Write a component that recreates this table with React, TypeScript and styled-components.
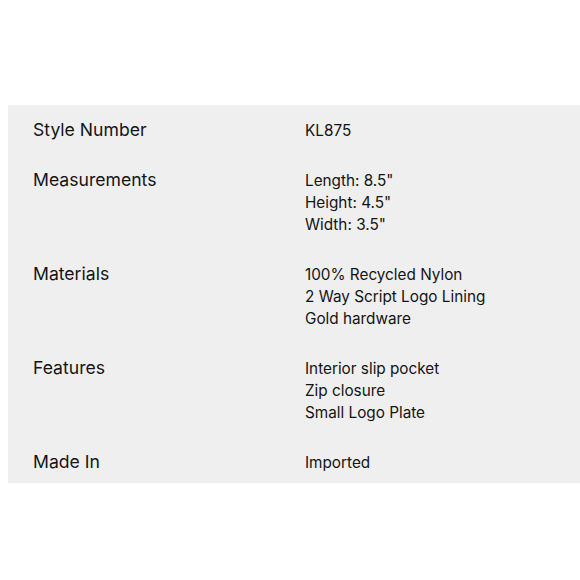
import React from 'react'
import styled, { createGlobalStyle } from 'styled-components'

interface Spec {
    label: string,
    values: string[]
}

const specs: Spec[] = [
    { label: 'Style Number', values: ['KL875'] },
    { label: 'Measurements', values: ['Length: 8.5"', 'Height: 4.5"', 'Width: 3.5"'] },
    { label: 'Materials', values: ['100% Recycled Nylon', '2 Way Script Logo Lining', 'Gold hardware'] },
    { label: 'Features', values: ['Interior slip pocket', 'Zip closure', 'Small Logo Plate'] },
    { label: 'Made In', values: ['Imported'] }
]

const GlobalStyle = createGlobalStyle`
    html, body {
        margin: 0;
        padding: 0;
        background: #ffffff;
        overflow: hidden;
    }
    body {
        font-family: Inter, "Noto Sans", sans-serif;
        color: #141414;
    }
`

const Page = styled.div`
    width: 580px;
    height: 580px;
    padding-top: 105px;
    padding-left: 8px;
    box-sizing: border-box;
`

const Panel = styled.div`
    width: 600px;
    background: #efefef;
    padding: 14px 0 9px 25px;
    box-sizing: border-box;
    display: flex;
    flex-direction: column;
    gap: 26.5px;
`

const Row = styled.div`
    display: grid;
    grid-template-columns: 272px 1fr;
    align-items: baseline;
`

const Label = styled.div`
    font-size: 17.6px;
    line-height: 22.5px;
`

const Values = styled.div`
    display: flex;
    flex-direction: column;
`

const Value = styled.div`
    font-size: 15.3px;
    line-height: 22.2px;
`

export default function App() {
    return (
        <Page>
            <GlobalStyle />
            <Panel>
                {specs.map(spec => (
                    <Row key={spec.label}>
                        <Label>{spec.label}</Label>
                        <Values>
                            {spec.values.map(v => <Value key={v}>{v}</Value>)}
                        </Values>
                    </Row>
                ))}
            </Panel>
        </Page>
    )
}
